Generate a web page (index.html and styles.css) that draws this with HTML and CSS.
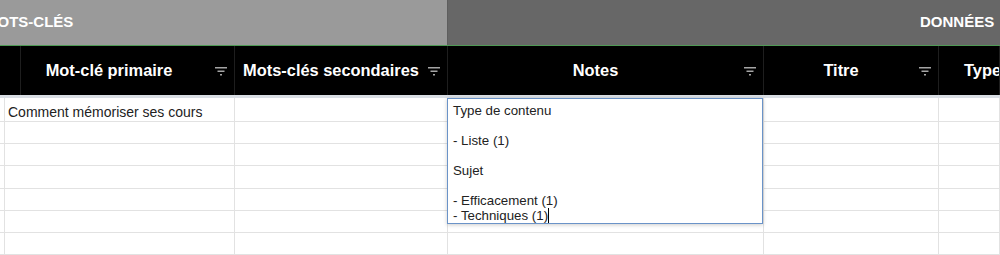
FILE: index.html
```html
<!DOCTYPE html>
<html lang="fr">
<head>
	<meta charset="UTF-8">
	<title>Mots-clés - Notes</title>
	<link rel="stylesheet" href="styles.css">
</head>
<body>
	<div class="sheet">
		<!-- Merged group headers -->
		<div class="band">
			<div class="band-cell band-keywords"><span class="band-title band-title-cut">MOTS-CLÉS</span></div>
			<div class="band-cell band-data"><span class="band-title">DONNÉES</span></div>
		</div>

		<!-- Column headers -->
		<div class="row head">
			<div class="cell"></div>
			<div class="cell">Mot-clé primaire<svg class="filter" viewBox="0 0 12 9"><rect x="0" y="0" width="12" height="1.5"/><rect x="2.5" y="3.5" width="7" height="1.5"/><rect x="5" y="7" width="2" height="1.5"/></svg></div>
			<div class="cell">Mots-clés secondaires<svg class="filter" viewBox="0 0 12 9"><rect x="0" y="0" width="12" height="1.5"/><rect x="2.5" y="3.5" width="7" height="1.5"/><rect x="5" y="7" width="2" height="1.5"/></svg></div>
			<div class="cell">Notes<svg class="filter" viewBox="0 0 12 9"><rect x="0" y="0" width="12" height="1.5"/><rect x="2.5" y="3.5" width="7" height="1.5"/><rect x="5" y="7" width="2" height="1.5"/></svg></div>
			<div class="cell">Titre<svg class="filter" viewBox="0 0 12 9"><rect x="0" y="0" width="12" height="1.5"/><rect x="2.5" y="3.5" width="7" height="1.5"/><rect x="5" y="7" width="2" height="1.5"/></svg></div>
			<div class="cell cell-cut">Type</div>
		</div>

		<!-- Data rows -->
		<div class="row first">
			<div class="cell"></div>
			<div class="cell">Comment mémoriser ses cours</div>
			<div class="cell"></div>
			<div class="cell"></div>
			<div class="cell"></div>
			<div class="cell"></div>
		</div>
		<div class="row"><div class="cell"></div><div class="cell"></div><div class="cell"></div><div class="cell"></div><div class="cell"></div><div class="cell"></div></div>
		<div class="row"><div class="cell"></div><div class="cell"></div><div class="cell"></div><div class="cell"></div><div class="cell"></div><div class="cell"></div></div>
		<div class="row tall"><div class="cell"></div><div class="cell"></div><div class="cell"></div><div class="cell"></div><div class="cell"></div><div class="cell"></div></div>
		<div class="row"><div class="cell"></div><div class="cell"></div><div class="cell"></div><div class="cell"></div><div class="cell"></div><div class="cell"></div></div>
		<div class="row"><div class="cell"></div><div class="cell"></div><div class="cell"></div><div class="cell"></div><div class="cell"></div><div class="cell"></div></div>
		<div class="row"><div class="cell"></div><div class="cell"></div><div class="cell"></div><div class="cell"></div><div class="cell"></div><div class="cell"></div></div>

		<!-- Cell being edited -->
		<div class="editor">Type de contenu

- Liste (1)

Sujet

- Efficacement (1)
- Techniques (1)<span class="caret"></span></div>
	</div>
</body>
</html>
```

FILE: styles.css
```css
* {
	margin: 0;
	padding: 0;
	box-sizing: border-box;
}

body {
	font-family: 'Liberation Sans', Arial, sans-serif;
	background: #FFF;
	overflow: hidden;
}

.sheet {
	position: relative;
	width: 1000px;
	height: 255px;
	overflow: hidden;
}

/* Group band */
.band {
	display: grid;
	grid-template-columns: 448px 1fr;
	height: 46px;
	border-bottom: 1px solid #4f9a55;
}

.band-cell {
	display: flex;
	align-items: center;
	overflow: hidden;
	white-space: nowrap;
	padding-bottom: 3px;
}

.band-keywords {
	background-color: #9A9A9A;
	border-right: 1px solid #5E5E5E;
}

.band-data {
	background-color: #676767;
	padding-left: 472px;
}

.band-title {
	color: #FFF;
	font-weight: bold;
	font-size: 15px;
}

.band-title-cut {
	margin-left: -15px;
}

/* Grid rows */
.row {
	display: grid;
	grid-template-columns: 4px 231px 213px 316px 175px 1fr;
	height: 22px;
	border-bottom: 1px solid #E2E2E2;
}

.row .cell {
	border-right: 1px solid #E2E2E2;
	font-size: 14px;
	color: #222;
	white-space: nowrap;
	overflow: hidden;
	display: flex;
	align-items: flex-end;
	padding: 0 0 1px 4px;
}

.row.first {
	height: 24px;
}

.row.tall {
	height: 23px;
}

/* Header row */
.row.head {
	height: 52px;
	background-color: #000;
	border-bottom: 3px solid #D9DEE4;
}

.row.head .cell {
	position: relative;
	border-right-color: #1E1E1E;
	color: #FFF;
	font-weight: bold;
	font-size: 16.4px;
	align-items: center;
	justify-content: center;
	padding: 0 20px 1px 0;
}

.row.head .cell-cut {
	justify-content: flex-start;
	padding-left: 25px;
}

.filter {
	position: absolute;
	right: 7px;
	top: 21px;
	width: 12px;
	height: 9px;
	fill: #A5A5A5;
}

/* In-cell editor */
.editor {
	position: absolute;
	left: 447px;
	top: 98px;
	width: 316px;
	height: 126px;
	background: #FFF;
	border: 1px solid #6A93C8;
	box-shadow: 0 1px 4px rgba(0, 0, 0, 0.2);
	padding: 4px 5px;
	font-size: 13.3px;
	line-height: 15px;
	color: #222;
	white-space: pre;
}

.caret {
	display: inline-block;
	width: 1px;
	height: 15px;
	background: #000;
	vertical-align: -3px;
}
```
